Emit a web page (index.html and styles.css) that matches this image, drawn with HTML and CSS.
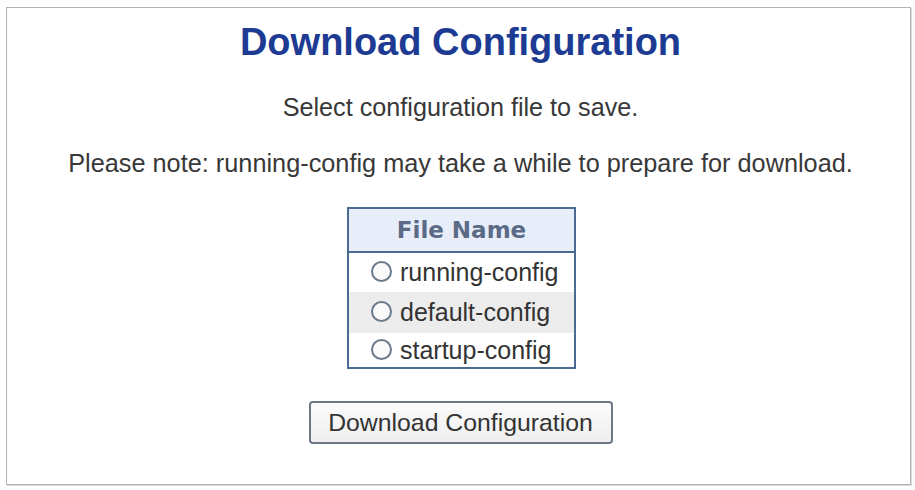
FILE: index.html
```html
<!DOCTYPE html>
<html>
<head>
<meta charset="utf-8">
<link rel="stylesheet" href="styles.css">
</head>
<body>
<div class="panel">
  <h1 class="title">Download Configuration</h1>
  <p class="msg msg-first">Select configuration file to save.</p>
  <p class="msg">Please note: running-config may take a while to prepare for download.</p>
  <table class="files">
    <thead>
      <tr><th>File Name</th></tr>
    </thead>
    <tbody>
      <tr class="row"><td><span class="radio"></span>running-config</td></tr>
      <tr class="row alt"><td><span class="radio"></span>default-config</td></tr>
      <tr class="row last"><td><span class="radio"></span>startup-config</td></tr>
    </tbody>
  </table>
  <div class="actions">
    <button class="btn" type="button">Download Configuration</button>
  </div>
</div>
</body>
</html>
```
FILE: styles.css
```css
html, body {
  margin: 0;
  padding: 0;
  background: #ffffff;
}
body {
  padding: 7px 4px 2px 6px;
  font-family: "Liberation Sans", Arial, sans-serif;
  color: #333333;
}
.panel {
  border: 1px solid #b4b4b4;
  box-shadow: 1px 1px 0 #d8d8d8;
  height: 478px;
  box-sizing: border-box;
  padding-left: 4px;
  display: flex;
  flex-direction: column;
  align-items: center;
}
.title {
  margin: 19px 0 0 0;
  font-size: 38px;
  font-weight: bold;
  color: #1d3b93;
  line-height: 30px;
}
.msg {
  margin: 0;
  font-size: 25.2px;
  line-height: 28px;
  color: #383838;
}
.msg-first {
  margin-top: 36px;
}
.msg + .msg {
  margin-top: 28px;
  font-size: 25.3px;
}
.files {
  margin-top: 30px;
  margin-left: 2px;
  border-collapse: collapse;
  border: 2px solid #4b6a92;
  width: 229px;
}
.files th {
  background: #e7eef9;
  color: #5b6a86;
  font-family: "DejaVu Sans", Verdana, sans-serif;
  font-weight: bold;
  font-size: 23px;
  height: 42px;
  padding: 0;
  border-bottom: 2px solid #4b6a92;
}
.files td {
  font-size: 25px;
  color: #333333;
  padding: 0 0 0 22px;
  height: 39px;
  white-space: nowrap;
}
.row.alt td {
  background: #ececec;
  height: 41px;
}
.row.last td {
  height: 34px;
}
.radio {
  display: inline-block;
  width: 17px;
  height: 17px;
  border: 2px solid #6b7a8a;
  border-radius: 50%;
  background: #fafafa;
  vertical-align: -1px;
  margin-right: 8px;
}
.actions {
  margin-top: 32px;
}
.btn {
  width: 304px;
  height: 43px;
  font-family: "Liberation Sans", Arial, sans-serif;
  font-size: 24.8px;
  color: #333333;
  background: linear-gradient(#fbfbfb, #eeeeee);
  border: 2px solid #6c7885;
  border-radius: 4px;
  padding: 0;
}
```
